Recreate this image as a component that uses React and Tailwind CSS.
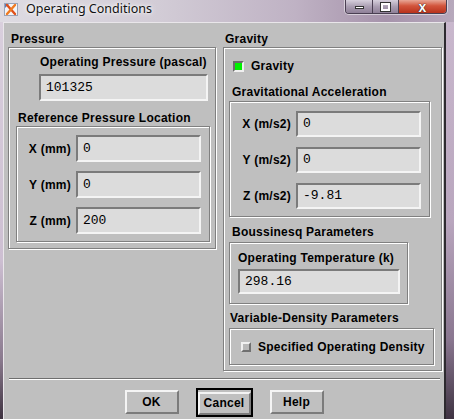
import React from "react";

const etched = "border border-[#808080] shadow-[inset_1px_1px_0_#ffffff,1px_1px_0_#ffffff]";
const sunken = "border-2 border-t-[#7b7b7b] border-l-[#7b7b7b] border-b-[#f4f4f4] border-r-[#f4f4f4] bg-[#dcdcdc]";
const raised = "border-2 border-t-[#f4f4f4] border-l-[#f4f4f4] border-b-[#7b7b7b] border-r-[#7b7b7b] bg-[#c0c0c0]";
const label = "block h-[14px] leading-[14px] text-[12px] font-bold text-black whitespace-nowrap tracking-[0.25px]";
const mono = "font-['Liberation_Mono',monospace] text-[13px] text-black";

function Field({ value, className }) {
  return (
    <div className={`${sunken} ${className} box-border flex items-center pl-[5px]`}>
      <span className={mono}>{value}</span>
    </div>
  );
}

function Row({ name, value, labelW, h, top }) {
  return (
    <div className={`flex items-center ${top}`}>
      <span className={`${label} text-right`} style={{ width: labelW }}>
        {name}
      </span>
      <Field value={value} className={`ml-[5px] w-[125px] ${h}`} />
    </div>
  );
}

function AppIcon() {
  return (
    <svg width="14" height="13" viewBox="0 0 14 13">
      <rect x="0.5" y="0.5" width="13" height="12" fill="#f4f4f6" stroke="#9aa4b8" />
      <path d="M1 1 L5 1 L1 5 Z" fill="#5a7ab8" />
      <path d="M3 2 L11 11" stroke="#e0501a" strokeWidth="2.4" strokeLinecap="round" />
      <path d="M11 2 L3 11" stroke="#f07a20" strokeWidth="2.4" strokeLinecap="round" />
    </svg>
  );
}

function TitleBar() {
  return (
    <div className="relative h-[22px] flex items-start bg-[linear-gradient(90deg,#dedbe2_0%,#d2ccd6_35%,#bfb2c4_65%,#a693ab_85%,#b7a9bc_100%)]">
      <div className="mt-[3px] ml-[4px]">
        <AppIcon />
      </div>
      <span className="ml-[8px] mt-[1px] text-[12.5px] leading-[16px] text-[#111] font-['Noto_Sans',sans-serif] [text-shadow:0_0_6px_#ffffff,0_0_3px_#ffffff]">
        Operating Conditions
      </span>
      <div className="ml-auto mr-[7px] flex h-[14px] rounded-b-[4px] border border-t-0 border-[#4a3f52] overflow-hidden shadow-[0_0_0_1px_rgba(255,255,255,0.5)]">
        <div className="w-[27px] flex items-center justify-center bg-[linear-gradient(180deg,#d6cfdc_0%,#aa9eb2_50%,#8f8098_100%)] border-r border-[#4a3f52]">
          <div className="w-[9px] h-[3px] bg-white border border-[#333] mt-[2px]" />
        </div>
        <div className="w-[26px] flex items-center justify-center bg-[linear-gradient(180deg,#d6cfdc_0%,#aa9eb2_50%,#8f8098_100%)] border-r border-[#4a3f52]">
          <div className="w-[9px] h-[8px] border-2 border-white outline outline-1 outline-[#333]" />
        </div>
        <div className="w-[47px] flex items-center justify-center bg-[linear-gradient(180deg,#e8a796_0%,#d2553c_45%,#b8321c_100%)]">
          <span className="text-white font-bold text-[14px] leading-[12px] font-['Liberation_Sans',sans-serif] [text-shadow:0_0_1px_#222,0_0_1px_#222]">
            x
          </span>
        </div>
      </div>
    </div>
  );
}

export default function App() {
  return (
    <div className="w-[454px] h-[419px] flex flex-col overflow-hidden font-['Liberation_Sans',Arial,sans-serif] bg-[#b6a9bb]">
      <TitleBar />
      <div className="flex flex-1 min-h-0">
        {/* left window edge */}
        <div className="w-[3px] bg-[linear-gradient(180deg,#d9cfdd_0%,#cdbfd2_60%,#8a7a8e_85%,#3e3240_100%)]" />
        {/* client area */}
        <div className="w-[443px] flex flex-col bg-[#bfbfbf] border-l border-t border-[#e9e6ea] border-r-2 border-r-[#2d2a2f] box-border">
          <div className="flex gap-[7px] pl-[4px] pt-[8px]">
            {/* Pressure column */}
            <div className="w-[208px] flex flex-col">
              <span className={`${label} h-[16px] leading-[16px] pl-[3px]`}>Pressure</span>
              <div className={`${etched} h-[202px] box-border flex flex-col`}>
                <span className={`${label} mt-[7px] ml-[31px]`}>Operating Pressure (pascal)</span>
                <Field value="101325" className="mt-[5px] ml-[30px] w-[169px] h-[27px]" />
                <span className={`${label} mt-[10px] ml-[9px]`}>Reference Pressure Location</span>
                <div className={`${etched} mt-[1px] ml-[7px] w-[194px] h-[116px] box-border flex flex-col pt-[8px]`}>
                  <Row name="X (mm)" value="0" labelW={54} h="h-[27px]" top="" />
                  <Row name="Y (mm)" value="0" labelW={54} h="h-[27px]" top="mt-[9px]" />
                  <Row name="Z (mm)" value="200" labelW={54} h="h-[27px]" top="mt-[9px]" />
                </div>
              </div>
            </div>
            {/* Gravity column */}
            <div className="w-[219px] flex flex-col">
              <span className={`${label} h-[16px] leading-[16px] pl-[2px]`}>Gravity</span>
              <div className={`${etched} h-[324px] box-border flex flex-col`}>
                <div className="mt-[12px] ml-[9px] flex items-center h-[12px]">
                  <div className="w-[11px] h-[11px] box-border border-2 border-t-[#6b6b6b] border-l-[#6b6b6b] border-b-[#f0f0f0] border-r-[#f0f0f0] bg-[#00f000]" />
                  <span className={`${label} ml-[7px]`}>Gravity</span>
                </div>
                <span className={`${label} mt-[13px] ml-[8px]`}>Gravitational Acceleration</span>
                <div className={`${etched} mt-[2px] ml-[5px] w-[201px] h-[116px] box-border flex flex-col pt-[9px]`}>
                  <Row name="X (m/s2)" value="0" labelW={61} h="h-[26px]" top="" />
                  <Row name="Y (m/s2)" value="0" labelW={61} h="h-[26px]" top="mt-[10px]" />
                  <Row name="Z (m/s2)" value="-9.81" labelW={61} h="h-[26px]" top="mt-[10px]" />
                </div>
                <span className={`${label} mt-[8px] ml-[8px]`}>Boussinesq Parameters</span>
                <div className={`${etched} mt-[3px] ml-[5px] w-[179px] h-[62px] box-border flex flex-col pt-[8px]`}>
                  <span className={`${label} ml-[8px]`}>Operating Temperature (k)</span>
                  <Field value="298.16" className="mt-[4px] ml-[8px] w-[162px] h-[25px]" />
                </div>
                <span className={`${label} mt-[7px] ml-[6px]`}>Variable-Density Parameters</span>
                <div className={`${etched} mt-[3px] ml-[5px] w-[205px] h-[37px] box-border flex items-center pl-[11px]`}>
                  <div className="w-[10px] h-[10px] box-border border-2 border-t-[#f0f0f0] border-l-[#f0f0f0] border-b-[#707070] border-r-[#707070] bg-[#b8b8b8]" />
                  <span className={`${label} ml-[7px]`}>Specified Operating Density</span>
                </div>
              </div>
            </div>
          </div>
          {/* separator */}
          <div className="mt-[7px] ml-[5px] mr-[4px] h-[2px] border-t border-[#6e6e6e] bg-white" />
          {/* dialog buttons */}
          <div className="mt-[8px] flex justify-center items-center gap-[17px]">
            <button className={`${raised} w-[54px] h-[24px] box-border text-[12px] font-bold text-black tracking-[0.25px]`}>OK</button>
            <div className="border-2 border-black">
              <button className={`${raised} w-[53px] h-[23px] box-border text-[12px] font-bold text-black tracking-[0.25px]`}>Cancel</button>
            </div>
            <button className={`${raised} w-[54px] h-[24px] box-border text-[12px] font-bold text-black tracking-[0.25px]`}>Help</button>
          </div>
        </div>
        {/* right window edge */}
        <div className="flex-1 bg-[linear-gradient(180deg,#c9b8cd_0%,#b9a6be_50%,#8a7790_80%,#3f3342_100%)]" />
      </div>
    </div>
  );
}
